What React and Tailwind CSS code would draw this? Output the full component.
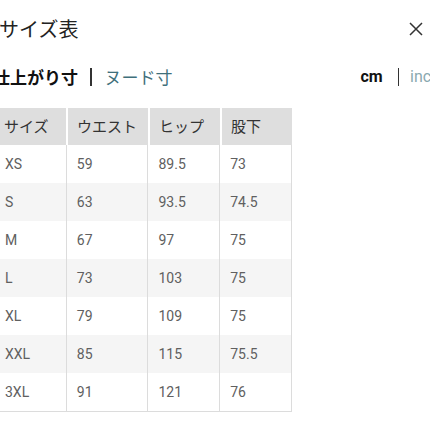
import React from "react";

const rows = [
  ["XS", "59", "89.5", "73"],
  ["S", "63", "93.5", "74.5"],
  ["M", "67", "97", "75"],
  ["L", "73", "103", "75"],
  ["XL", "79", "109", "75"],
  ["XXL", "85", "115", "75.5"],
  ["3XL", "91", "121", "76"],
];

const widths = ["w-[71px]", "w-[82px]", "w-[72px]", "w-[72px]"];

export default function App() {
  return (
    <div
      className="w-[430px] h-[430px] bg-white overflow-hidden relative"
      style={{ fontFamily: "Roboto, 'Noto Sans CJK JP', sans-serif" }}
    >
      <div className="flex items-center justify-between h-[28px] mt-[15px]">
        <div className="text-[20px] leading-[28px] text-[#222] -ml-[1px]" style={{ fontFamily: "'Noto Sans CJK JP', sans-serif" }}>
          サイズ表
        </div>
        <div className="mr-[7px] w-[14px] h-[14px]">
          <svg width="14" height="14" viewBox="0 0 14 14">
            <path d="M1 1 L13 13 M13 1 L1 13" stroke="#333" strokeWidth="1.5" />
          </svg>
        </div>
      </div>
      <div className="flex items-center justify-between h-[24px] mt-[22px]">
        <div className="flex items-center -ml-[7px] text-[17px] leading-[24px]" style={{ fontFamily: "'Noto Sans CJK JP', sans-serif" }}>
          <span className="font-bold text-[#111]">仕上がり寸</span>
          <span className="ml-[12px] mr-[13px] w-[1.5px] h-[18px] bg-[#333]" />
          <span className="text-[#3f6f7b]">ヌード寸</span>
        </div>
        <div className="flex items-center text-[16px] leading-[24px] -mr-[10px]">
          <span className="font-bold text-[#111]" style={{ fontFamily: "Roboto, sans-serif" }}>cm</span>
          <span className="ml-[15px] mr-[11px] w-[1.5px] h-[18px] bg-[#333]" />
          <span className="text-[#8aa9b0]" style={{ fontFamily: "Roboto, sans-serif" }}>inch</span>
        </div>
      </div>
      <div className="mt-[19px] -ml-[5px] w-[297px] border-b border-[#dcdcdc]">
        <div className="flex h-[37px] bg-[#dedede] text-[15px] text-[#333]" style={{ fontFamily: "'Noto Sans CJK JP', sans-serif" }}>
          {["サイズ", "ウエスト", "ヒップ", "股下"].map((h, i) => (
            <div
              key={i}
              className={`${widths[i]} flex items-center pl-[9px] ${i > 0 ? "border-l-2 border-white" : ""}`}
            >
              {h}
            </div>
          ))}
        </div>
        {rows.map((r, ri) => (
          <div
            key={ri}
            className={`flex h-[38px] text-[14px] text-[#606060] border-r border-[#dcdcdc] ${ri % 2 === 1 ? "bg-[#f5f5f5]" : "bg-white"}`}
          >
            {r.map((c, ci) => (
              <div
                key={ci}
                className={`${widths[ci]} flex items-center pl-[10px] ${ci > 0 ? "border-l border-[#dcdcdc]" : ""}`}
              >
                {c}
              </div>
            ))}
          </div>
        ))}
      </div>
    </div>
  );
}
